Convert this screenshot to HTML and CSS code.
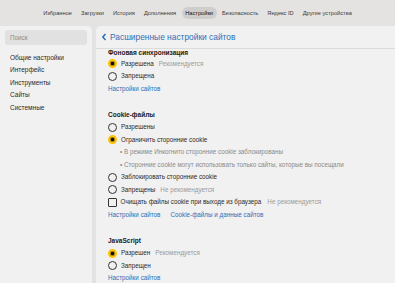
FILE: index.html
```html
<!DOCTYPE html>
<html lang="ru">
<head>
<meta charset="utf-8">
<link rel="stylesheet" href="styles.css">
</head>
<body>
<nav class="topnav">
  <span class="nav-item">Избранное</span>
  <span class="nav-item">Загрузки</span>
  <span class="nav-item">История</span>
  <span class="nav-item">Дополнения</span>
  <span class="nav-item active">Настройки</span>
  <span class="nav-item">Безопасность</span>
  <span class="nav-item">Яндекс ID</span>
  <span class="nav-item">Другие устройства</span>
</nav>
<div class="layout">
  <aside class="sidebar">
    <div class="search">Поиск</div>
    <ul class="side-menu">
      <li>Общие настройки</li>
      <li>Интерфейс</li>
      <li>Инструменты</li>
      <li>Сайты</li>
      <li>Системные</li>
    </ul>
  </aside>
  <main class="main">
    <header class="main-header">
      <svg class="chev" width="6" height="8" viewBox="0 0 6 8"><path d="M4.5 1 L1.8 4 L4.5 7" fill="none" stroke="#2f6fb6" stroke-width="1.5"/></svg>
      <h1>Расширенные настройки сайтов</h1>
    </header>
    <div class="scroll">
      <div class="content">
        <section class="group first">
          <h2>Фоновая синхронизация</h2>
          <div class="row"><span class="radio on"></span>Разрешена<span class="hint">Рекомендуется</span></div>
          <div class="row"><span class="radio"></span>Запрещена</div>
          <div class="links"><a>Настройки сайтов</a></div>
        </section>
        <section class="group">
          <h2>Cookie-файлы</h2>
          <div class="row"><span class="radio"></span>Разрешены</div>
          <div class="row"><span class="radio on"></span>Ограничить сторонние cookie</div>
          <div class="row sub">• В режиме Инкогнито сторонние cookie заблокированы</div>
          <div class="row sub">• Сторонние cookie могут использовать только сайты, которые вы посещали</div>
          <div class="row"><span class="radio"></span>Заблокировать сторонние cookie</div>
          <div class="row"><span class="radio"></span>Запрещены<span class="hint">Не рекомендуется</span></div>
          <div class="row"><span class="check"></span>Очищать файлы cookie при выходе из браузера<span class="hint wide">Не рекомендуется</span></div>
          <div class="links"><a>Настройки сайтов</a><a>Cookie-файлы и данные сайтов</a></div>
        </section>
        <section class="group">
          <h2>JavaScript</h2>
          <div class="row"><span class="radio on"></span>Разрешен<span class="hint">Рекомендуется</span></div>
          <div class="row"><span class="radio"></span>Запрещен</div>
          <div class="links"><a>Настройки сайтов</a></div>
        </section>
      </div>
    </div>
  </main>
</div>
</body>
</html>
```

FILE: styles.css
```css
html, body {
  margin: 0;
  padding: 0;
}
body {
  width: 395px;
  height: 283px;
  overflow: hidden;
  background: #e4e3e2;
  font-family: "Liberation Sans", Arial, sans-serif;
  color: #333;
}
.topnav {
  height: 26px;
  display: flex;
  align-items: center;
  justify-content: center;
  gap: 2px;
  box-sizing: border-box;
}
.nav-item {
  font-size: 5.7px;
  color: #3a3a3a;
  padding: 2.5px 3.5px;
  line-height: 7px;
  border-radius: 6px;
}
.nav-item.active {
  background: #cfcecd;
  color: #111;
}
.layout {
  display: flex;
  gap: 4px;
  height: 257px;
}
.sidebar {
  width: 92px;
  background: #f1f1f1;
  border-radius: 0 5px 0 0;
  padding: 4px 5px 0 5px;
  box-sizing: border-box;
}
.search {
  height: 15px;
  background: #e1e1e1;
  border-radius: 3px;
  font-size: 6.3px;
  color: #8a8a8a;
  line-height: 15px;
  padding-left: 5px;
}
.side-menu {
  list-style: none;
  margin: 7px 0 0 0;
  padding: 0 0 0 5px;
}
.side-menu li {
  font-size: 6.5px;
  line-height: 12.4px;
  color: #2a2a2a;
}
.main {
  flex: 1;
  background: #f1f1f1;
  border-radius: 5px 0 0 0;
  display: flex;
  flex-direction: column;
  overflow: hidden;
}
.main-header {
  height: 22px;
  border-bottom: 1px solid #dcdcdc;
  display: flex;
  align-items: center;
  gap: 3px;
  padding-left: 5px;
  flex-shrink: 0;
}
.main-header h1 {
  margin: 0;
  font-size: 8.4px;
  font-weight: 400;
  color: #2f6fb6;
}
.scroll {
  flex: 1;
  overflow: hidden;
}
.content {
  margin-top: -1px;
  padding-left: 12px;
}
.group {
  margin-bottom: 13.5px;
}
.group h2 {
  margin: 0;
  font-size: 6.5px;
  font-weight: 700;
  line-height: 12.5px;
  color: #1a1a1a;
}
.group.first h2 {
  line-height: 9.5px;
}
.row {
  display: flex;
  align-items: center;
  font-size: 6.3px;
  line-height: 12.5px;
  height: 12.5px;
  color: #2a2a2a;
}
.row.sub {
  padding-left: 12px;
  color: #8a8a8a;
}
.hint {
  color: #9a9a9a;
  margin-left: 5px;
}
.hint.wide {
  margin-left: 6px;
}
.radio {
  width: 9px;
  height: 9px;
  box-sizing: border-box;
  border: 1.2px solid #333;
  border-radius: 50%;
  margin-right: 4px;
  flex-shrink: 0;
}
.radio.on {
  border: 2px solid #ffc300;
  background: #111;
  box-shadow: inset 0 0 0 0.5px #ffc300;
}
.check {
  width: 8.5px;
  height: 8.5px;
  box-sizing: border-box;
  border: 1.2px solid #333;
  border-radius: 1px;
  margin-right: 4px;
  flex-shrink: 0;
}
.links {
  display: flex;
  gap: 10px;
  font-size: 6.3px;
  line-height: 12.5px;
}
.links a {
  color: #2f6fb6;
}
```
